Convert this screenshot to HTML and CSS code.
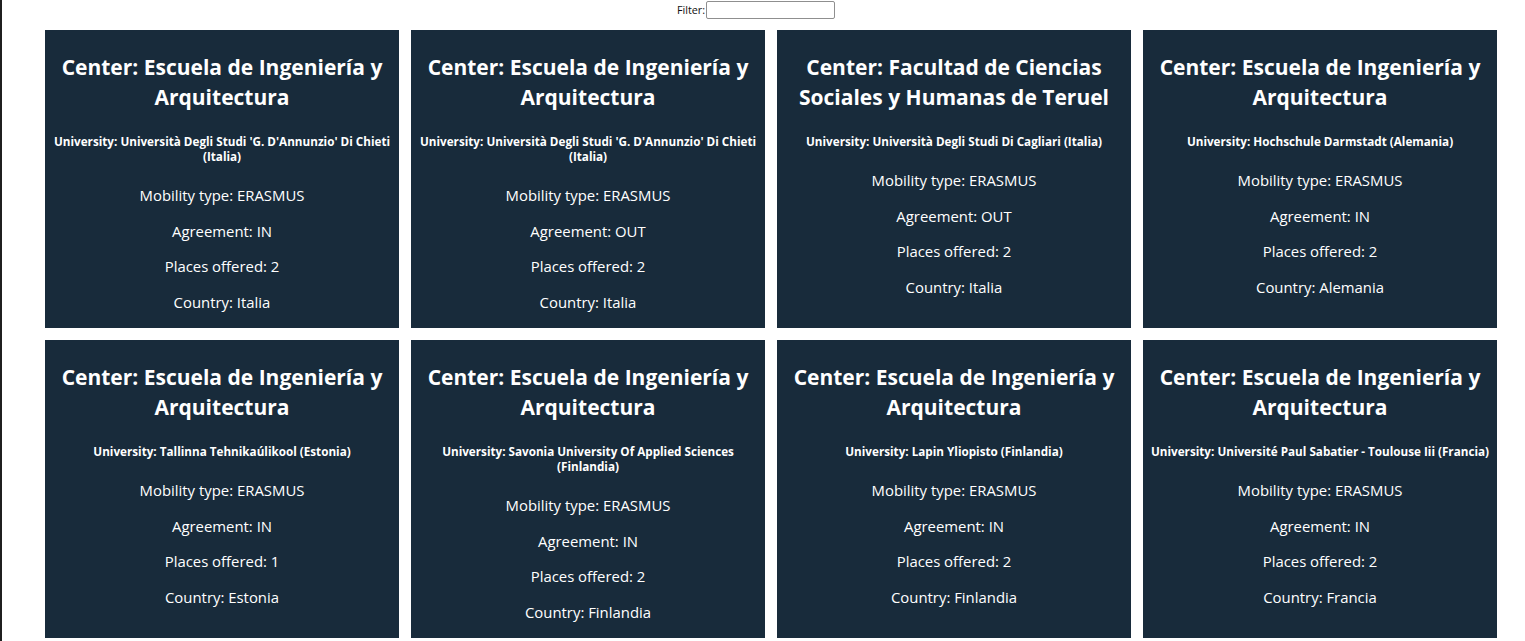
FILE: index.html
```html
<!DOCTYPE html>
<html lang="es">
<head>
<meta charset="utf-8">
<title>Mobility agreements</title>
<link rel="stylesheet" href="styles.css">
</head>
<body>
<div class="filter">
  <label class="filter-label" for="filter">Filter:</label><input class="filter-input" id="filter" type="text">
</div>
<main class="grid">
  <section class="card">
    <h2 class="card-center">Center: Escuela de Ingeniería y Arquitectura</h2>
    <h4 class="card-uni">University: Università Degli Studi 'G. D'Annunzio' Di Chieti (Italia)</h4>
    <p class="card-row">Mobility type: ERASMUS</p>
    <p class="card-row">Agreement: IN</p>
    <p class="card-row">Places offered: 2</p>
    <p class="card-row">Country: Italia</p>
  </section>
  <section class="card">
    <h2 class="card-center">Center: Escuela de Ingeniería y Arquitectura</h2>
    <h4 class="card-uni">University: Università Degli Studi 'G. D'Annunzio' Di Chieti (Italia)</h4>
    <p class="card-row">Mobility type: ERASMUS</p>
    <p class="card-row">Agreement: OUT</p>
    <p class="card-row">Places offered: 2</p>
    <p class="card-row">Country: Italia</p>
  </section>
  <section class="card">
    <h2 class="card-center">Center: Facultad de Ciencias Sociales y Humanas de Teruel</h2>
    <h4 class="card-uni">University: Università Degli Studi Di Cagliari (Italia)</h4>
    <p class="card-row">Mobility type: ERASMUS</p>
    <p class="card-row">Agreement: OUT</p>
    <p class="card-row">Places offered: 2</p>
    <p class="card-row">Country: Italia</p>
  </section>
  <section class="card">
    <h2 class="card-center">Center: Escuela de Ingeniería y Arquitectura</h2>
    <h4 class="card-uni">University: Hochschule Darmstadt (Alemania)</h4>
    <p class="card-row">Mobility type: ERASMUS</p>
    <p class="card-row">Agreement: IN</p>
    <p class="card-row">Places offered: 2</p>
    <p class="card-row">Country: Alemania</p>
  </section>
  <section class="card">
    <h2 class="card-center">Center: Escuela de Ingeniería y Arquitectura</h2>
    <h4 class="card-uni">University: Tallinna Tehnikaúlikool (Estonia)</h4>
    <p class="card-row">Mobility type: ERASMUS</p>
    <p class="card-row">Agreement: IN</p>
    <p class="card-row">Places offered: 1</p>
    <p class="card-row">Country: Estonia</p>
  </section>
  <section class="card">
    <h2 class="card-center">Center: Escuela de Ingeniería y Arquitectura</h2>
    <h4 class="card-uni">University: Savonia University Of Applied Sciences (Finlandia)</h4>
    <p class="card-row">Mobility type: ERASMUS</p>
    <p class="card-row">Agreement: IN</p>
    <p class="card-row">Places offered: 2</p>
    <p class="card-row">Country: Finlandia</p>
  </section>
  <section class="card">
    <h2 class="card-center">Center: Escuela de Ingeniería y Arquitectura</h2>
    <h4 class="card-uni">University: Lapin Yliopisto (Finlandia)</h4>
    <p class="card-row">Mobility type: ERASMUS</p>
    <p class="card-row">Agreement: IN</p>
    <p class="card-row">Places offered: 2</p>
    <p class="card-row">Country: Finlandia</p>
  </section>
  <section class="card">
    <h2 class="card-center">Center: Escuela de Ingeniería y Arquitectura</h2>
    <h4 class="card-uni">University: Université Paul Sabatier - Toulouse Iii (Francia)</h4>
    <p class="card-row">Mobility type: ERASMUS</p>
    <p class="card-row">Agreement: IN</p>
    <p class="card-row">Places offered: 2</p>
    <p class="card-row">Country: Francia</p>
  </section>
</main>
</body>
</html>
```

FILE: styles.css
```css
html, body {
  margin: 0;
  padding: 0;
}

body {
  background: #ffffff;
  border-left: 2px solid #1f1f1f;
  min-height: 100vh;
  box-sizing: border-box;
  font-family: "Open Sans", "Noto Sans", sans-serif;
  color: #000;
}

.filter {
  display: flex;
  justify-content: center;
  align-items: center;
  padding: 1px 15px 0 0;
  height: 18px;
}

.filter-label {
  font-size: 10.8px;
  line-height: 18px;
  color: #111;
}

.filter-input {
  box-sizing: border-box;
  width: 129px;
  height: 18px;
  margin: 0 0 0 1px;
  padding: 0 3px;
  border: 1px solid #8f8f8f;
  border-radius: 2px;
  background: #fff;
  font-family: inherit;
  font-size: 11px;
}

.grid {
  display: grid;
  grid-template-columns: repeat(4, 354px);
  column-gap: 12px;
  row-gap: 12px;
  padding: 11px 28px 0 43px;
}

.card {
  background: #182b3b;
  color: #ffffff;
  text-align: center;
}

.card-center {
  font-size: 21px;
  font-weight: 700;
  line-height: 30px;
  margin: 22px 0;
}

.card-uni {
  font-size: 11.7px;
  font-weight: 700;
  line-height: 15px;
  margin: 22px 0;
}

.card-row {
  font-size: 14.9px;
  line-height: 19.5px;
  margin: 16px 0;
}
```
